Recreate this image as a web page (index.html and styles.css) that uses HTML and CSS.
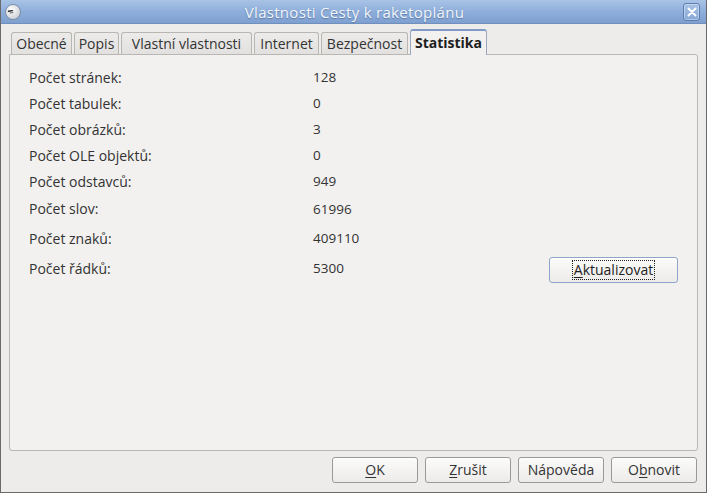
FILE: index.html
```html
<!DOCTYPE html>
<html lang="cs">
<head>
<meta charset="utf-8">
<title>Vlastnosti Cesty k raketoplánu</title>
<link rel="stylesheet" href="styles.css">
</head>
<body>
<div class="window">
  <div class="titlebar">
    <svg class="app-icon" width="18" height="18" viewBox="0 0 18 18">
      <defs>
        <radialGradient id="g" cx="0.4" cy="0.35" r="0.7">
          <stop offset="0" stop-color="#ffffff"/>
          <stop offset="1" stop-color="#c9cdd3"/>
        </radialGradient>
      </defs>
      <circle cx="9" cy="9" r="7.5" fill="url(#g)" stroke="#6f7f95" stroke-width="0.8"/>
      <path d="M4.5 8.2 L8.5 7.6" stroke="#222" stroke-width="1.4" stroke-linecap="round"/>
      <path d="M6 10 L9 9.6" stroke="#555" stroke-width="0.9" stroke-linecap="round"/>
    </svg>
    <div class="title">Vlastnosti Cesty k raketoplánu</div>
    <div class="close">
      <svg width="10" height="10" viewBox="0 0 10 10"><path d="M1.5 1.5 L8.5 8.5 M8.5 1.5 L1.5 8.5" stroke="#ffffff" stroke-width="2" stroke-linecap="round"/></svg>
    </div>
  </div>
  <div class="body">
    <div class="tabs">
      <div class="tab t1">Obecné</div>
      <div class="tab t2">Popis</div>
      <div class="tab t3">Vlastní vlastnosti</div>
      <div class="tab t4">Internet</div>
      <div class="tab t5">Bezpečnost</div>
      <div class="tab active">Statistika</div>
    </div>
    <div class="panel">
      <div class="stats">
        <div class="lbl">Počet stránek:</div><div class="val">128</div><div></div>
        <div class="lbl">Počet tabulek:</div><div class="val">0</div><div></div>
        <div class="lbl">Počet obrázků:</div><div class="val">3</div><div></div>
        <div class="lbl">Počet OLE objektů:</div><div class="val">0</div><div></div>
        <div class="lbl">Počet odstavců:</div><div class="val">949</div><div></div>
        <div class="lbl">Počet slov:</div><div class="val">61996</div><div></div>
        <div class="lbl">Počet znaků:</div><div class="val">409110</div><div></div>
        <div class="lbl">Počet řádků:</div><div class="val">5300</div>
        <div class="btn-cell"><button class="btn focus"><span class="focus-ring"><u>A</u>ktualizovat</span></button></div>
      </div>
    </div>
    <div class="actions">
      <button class="btn"><u>O</u>K</button>
      <button class="btn"><u>Z</u>rušit</button>
      <button class="btn">Nápověda</button>
      <button class="btn">O<u>b</u>novit</button>
    </div>
  </div>
</div>
</body>
</html>
```

FILE: styles.css
```css
* { box-sizing: border-box; }
html, body { margin: 0; padding: 0; }
body {
  width: 707px;
  height: 493px;
  overflow: hidden;
  font-family: "Open Sans", "DejaVu Sans", sans-serif;
  font-size: 13px;
  color: #333333;
  background: #edeceb;
}
.window {
  width: 707px;
  height: 493px;
  border: 1px solid #6a6a6a;
  border-top: none;
  display: flex;
  flex-direction: column;
  background: #edeceb;
}
.titlebar {
  height: 24px;
  flex: none;
  display: flex;
  align-items: center;
  padding: 0 6px 0 3px;
  background: linear-gradient(#a9c3e6, #8eaedb 50%, #7f9fcf);
  border-bottom: 1px solid #6f8fbf;
}
.app-icon { flex: none; }
.title {
  flex: 1;
  text-align: center;
  color: #f3f5f9;
  font-size: 15px;
  letter-spacing: 0.3px;
  text-shadow: 0 1px 1px #5a7aa8;
  padding-left: 4px;
}
.close {
  width: 17px;
  height: 18px;
  border: 1px solid #5c7eb0;
  border-radius: 3px;
  background: linear-gradient(#a8c2e6, #86a7d6);
  display: flex;
  align-items: center;
  justify-content: center;
  box-shadow: inset 0 0 0 1px rgba(255,255,255,0.35);
}
.body {
  flex: 1;
  display: flex;
  flex-direction: column;
  padding: 4px 8px 8px 8px;
}
.tabs {
  display: flex;
  align-items: flex-end;
  gap: 2px;
  padding-left: 2px;
  height: 26px;
  flex: none;
  position: relative;
  z-index: 1;
}
.tab {
  height: 22px;
  border: 1px solid #b8b6b3;
  border-bottom: none;
  border-radius: 3px 3px 0 0;
  background: linear-gradient(#ecebea, #e2e1df);
  line-height: 21px;
  font-size: 14px;
  text-align: center;
  white-space: nowrap;
  color: #333333;
}
.t1 { width: 61px; }
.t2 { width: 45px; }
.t3 { width: 131px; }
.t4 { width: 65px; }
.t5 { width: 87px; }
.tab.active {
  width: 77px;
  height: 26px;
  font-weight: bold;
  color: #1e1e1e;
  background: #f2f1f0;
  border-color: #9aa9c0;
  border-top: 2px solid #7f9bc6;
  line-height: 24px;
  margin-bottom: -1px;
}
.panel {
  flex: none;
  height: 397px;
  background: #f2f1f0;
  border: 1px solid #b9b7b4;
  border-radius: 0 3px 3px 3px;
  padding: 9px 19px 0 19px;
}
.stats {
  display: grid;
  grid-template-columns: 284px 1fr 129px;
  grid-template-rows: 26px 26px 26px 26px 26px 29px 30px 30px;
  align-items: center;
}
.lbl { font-size: 14px; }
.val { font-size: 13.5px; }
.btn-cell { display: flex; align-items: center; justify-content: flex-end; padding-top: 4px; }
.btn {
  font-family: inherit;
  font-size: 14px;
  color: #333333;
  width: 86px;
  height: 26px;
  border: 1px solid #9b9995;
  border-radius: 3px;
  background: linear-gradient(#fbfbfa, #ecebea);
  box-shadow: inset 0 1px 0 #ffffff;
  padding: 0;
  line-height: 22px;
}
.btn.focus {
  width: 130px;
  border-color: #8ea5c9;
  color: #1e1e1e;
}
.focus-ring {
  border: 1px dotted #222;
  padding: 0 1px;
  display: inline-block;
  line-height: 18px;
}
.actions {
  display: flex;
  justify-content: flex-end;
  gap: 7px;
  padding-top: 6px;
  padding-right: 1px;
}
u { text-decoration: underline; text-underline-offset: 2px; }
```
